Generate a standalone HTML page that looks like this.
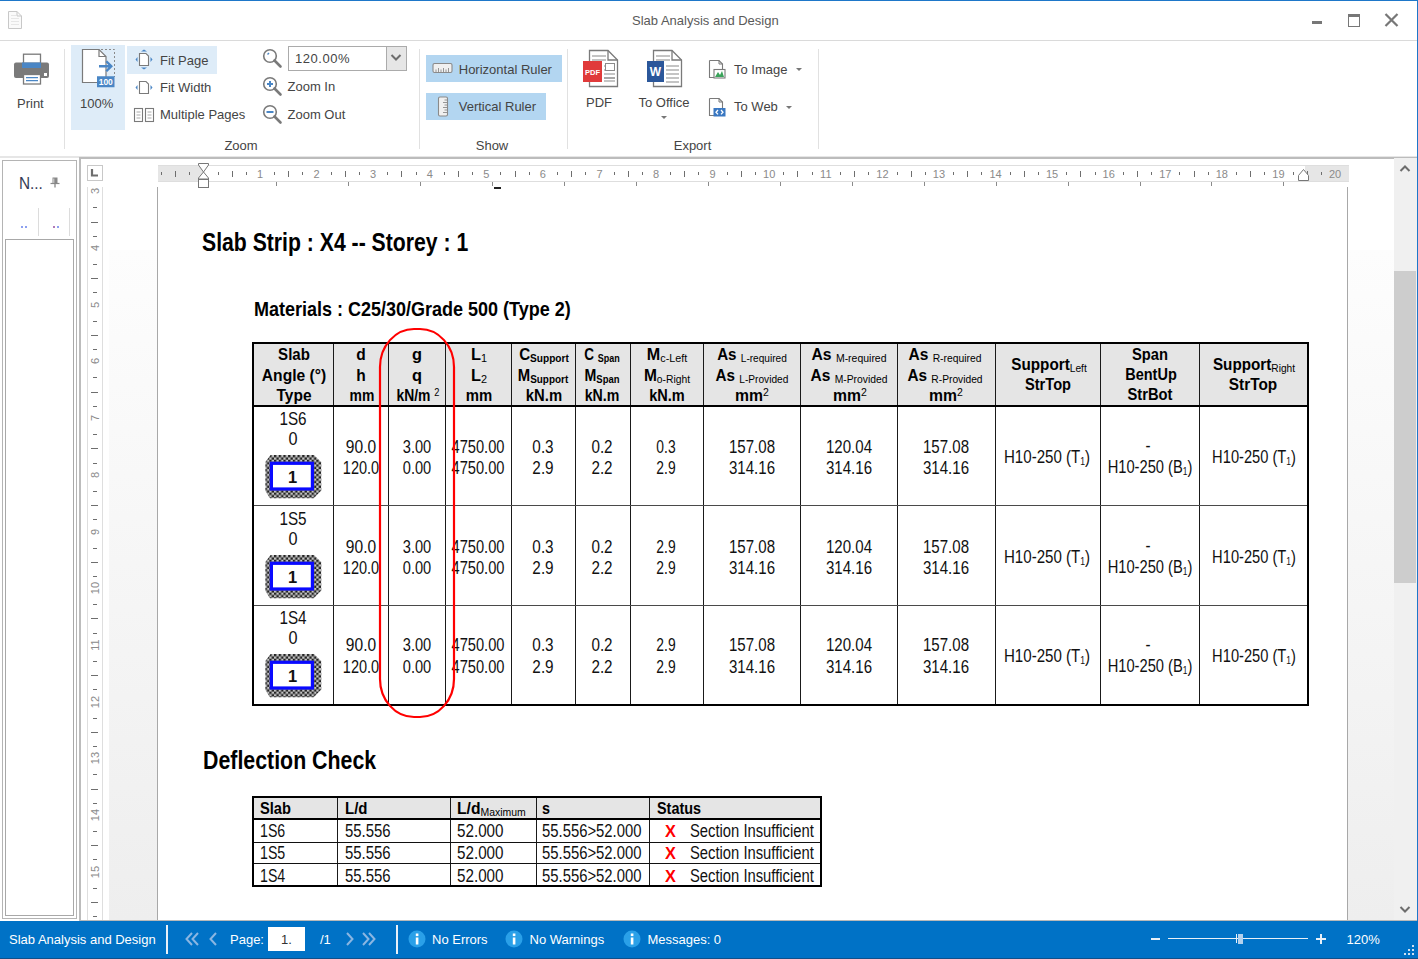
<!DOCTYPE html>
<html><head><meta charset="utf-8"><title>Slab Analysis and Design</title>
<style>
html,body{margin:0;padding:0;}
body{width:1418px;height:959px;position:relative;overflow:hidden;background:#fff;font-family:"Liberation Sans",sans-serif;}
.t{position:absolute;line-height:1;white-space:nowrap;}
.r{position:absolute;box-sizing:content-box;}
svg.r{overflow:visible}
</style></head><body>
<div class="r" style="left:0px;top:0px;width:1418px;height:1px;background:#1e77c9;"></div>
<svg class="r" style="left:7px;top:10px" width="16" height="20" viewBox="0 0 16 20">
<path d="M1.5 1.5 H10 L14.5 6 V18.5 H1.5 Z" fill="#fafafa" stroke="#c8c8c8" stroke-width="1"/>
<path d="M10 1.5 V6 H14.5" fill="none" stroke="#c8c8c8"/>
<path d="M4 5.5H9M4 8.5H12M4 11.5H12M4 14.5H12" stroke="#e6e6e6" stroke-width="1"/></svg>
<div class="t" style="left:632px;top:14.00px;font-size:13px;color:#5a5a5a;">Slab Analysis and Design</div>
<div class="r" style="left:1312px;top:21px;width:10px;height:3px;background:#777;"></div>
<div class="r" style="left:1348px;top:14px;width:10px;height:9px;border:1px solid #777;border-top:3px solid #777"></div>
<svg class="r" style="left:1384px;top:13px" width="15" height="14" viewBox="0 0 15 14">
<path d="M1.5 1 L13.5 13 M13.5 1 L1.5 13" stroke="#777" stroke-width="2.2"/></svg>
<div class="r" style="left:0px;top:40px;width:1418px;height:1px;background:#dadada;"></div>
<svg class="r" style="left:13px;top:52px" width="38" height="34" viewBox="0 0 38 34">
<rect x="10.5" y="2.2" width="17" height="10" fill="#fff" stroke="#7a7a7a" stroke-width="1.3"/>
<path d="M3 10.5 H34 Q36 10.5 36 12.5 V24 Q36 26 34 26 H3 Q1 26 1 24 V12.5 Q1 10.5 3 10.5Z" fill="#7a7a7a"/>
<rect x="9" y="10.5" width="19" height="5.5" fill="#4a86c5"/>
<rect x="31" y="21" width="3" height="3" fill="#fff"/>
<rect x="10.5" y="22.5" width="17" height="9.5" fill="#fff" stroke="#7a7a7a" stroke-width="1.3"/>
<path d="M13 25.6H25M13 28.7H25" stroke="#4a86c5" stroke-width="1.2"/></svg>
<div class="t" style="left:17px;top:97.00px;font-size:13px;color:#444;">Print</div>
<div class="r" style="left:64px;top:49px;width:1px;height:100px;background:#e1e1e1;"></div>
<div class="r" style="left:71px;top:45px;width:54px;height:85px;background:#deecf8;"></div>
<svg class="r" style="left:81px;top:48px" width="36" height="42" viewBox="0 0 36 42">
<path d="M1.5 1.5 H18 L25 8.5 V34.5 H1.5 Z" fill="#fff" stroke="#7a7a7a" stroke-width="1.2"/>
<path d="M18 1.5 V8.5 H25" fill="none" stroke="#7a7a7a" stroke-width="1.2"/>
<path d="M20 1.5 H33.5 V29" fill="none" stroke="#8a8a8a" stroke-width="1" stroke-dasharray="2 2"/>
<rect x="16" y="28.25" width="17.5" height="11" fill="#4a86c5"/>
<path d="M18 18.25 H30 M25.3 13.25 L30.3 18.25 L25.3 23.25" fill="none" stroke="#4a86c5" stroke-width="2.4"/>
<text x="24.75" y="37" font-family="Liberation Sans" font-size="8.5" fill="#fff" text-anchor="middle" font-weight="bold">100</text></svg>
<div class="t" style="left:80px;top:97.00px;font-size:13px;color:#444;">100%</div>
<div class="r" style="left:127px;top:46px;width:90px;height:28px;background:#deecf8;"></div>
<svg class="r" style="left:133px;top:49px" width="22" height="22" viewBox="0 0 22 22">
<path d="M6.5 4.5 H13 L15.5 7 V16.5 H6.5Z" fill="#fff" stroke="#7a7a7a" stroke-width="1.1"/>
<path d="M8 2.5 L11 0.5 L14 2.5Z M8 18.5 L11 20.5 L14 18.5Z M4.5 8 L2.5 10.5 L4.5 13Z M17.5 8 L19.5 10.5 L17.5 13Z" fill="#4a86c5"/></svg>
<div class="t" style="left:160px;top:54.00px;font-size:13px;color:#444;">Fit Page</div>
<svg class="r" style="left:133px;top:77px" width="22" height="22" viewBox="0 0 22 22">
<path d="M6.5 4.5 H13 L15.5 7 V16.5 H6.5Z" fill="#fff" stroke="#7a7a7a" stroke-width="1.1"/>
<path d="M4.5 8 L2.5 10.5 L4.5 13Z M17.5 8 L19.5 10.5 L17.5 13Z" fill="#4a86c5"/></svg>
<div class="t" style="left:160px;top:81.00px;font-size:13px;color:#444;">Fit Width</div>
<svg class="r" style="left:133px;top:107px" width="22" height="16" viewBox="0 0 22 16">
<rect x="1.5" y="1.5" width="8" height="13" fill="#fff" stroke="#7a7a7a" stroke-width="1.1"/>
<rect x="12.5" y="1.5" width="8" height="13" fill="#fff" stroke="#7a7a7a" stroke-width="1.1"/>
<path d="M3.5 5H7.5M3.5 8H7.5M3.5 11H7.5M14.5 5H18.5M14.5 8H18.5M14.5 11H18.5" stroke="#aaa" stroke-width="1"/></svg>
<div class="t" style="left:160px;top:108.00px;font-size:13px;color:#444;">Multiple Pages</div>
<svg class="r" style="left:262px;top:48px" width="21" height="21" viewBox="0 0 21 21">
<circle cx="8" cy="8" r="6.3" fill="#fff" stroke="#7a7a7a" stroke-width="1.6"/>
<path d="M12.5 12.5 L18.5 18.5" stroke="#7a7a7a" stroke-width="2.6" stroke-linecap="round"/><path d="M5.5 6.5 L7 5" stroke="#4a86c5" stroke-width="1.4"/></svg>
<svg class="r" style="left:262px;top:76px" width="21" height="21" viewBox="0 0 21 21">
<circle cx="8" cy="8" r="6.3" fill="#fff" stroke="#7a7a7a" stroke-width="1.6"/>
<path d="M12.5 12.5 L18.5 18.5" stroke="#7a7a7a" stroke-width="2.6" stroke-linecap="round"/><path d="M5 8H11M8 5V11" stroke="#4a86c5" stroke-width="2"/></svg>
<svg class="r" style="left:262px;top:104px" width="21" height="21" viewBox="0 0 21 21">
<circle cx="8" cy="8" r="6.3" fill="#fff" stroke="#7a7a7a" stroke-width="1.6"/>
<path d="M12.5 12.5 L18.5 18.5" stroke="#7a7a7a" stroke-width="2.6" stroke-linecap="round"/><path d="M4.5 8H11.5" stroke="#4a86c5" stroke-width="2"/></svg>
<div class="r" style="left:288px;top:46px;width:117px;height:23px;border:1px solid #ababab;background:#fff"></div>
<div class="r" style="left:386px;top:47px;width:19px;height:23px;border-left:1px solid #ababab;background:#e6e6e6"></div>
<svg class="r" style="left:390px;top:53px" width="12" height="9" viewBox="0 0 12 9"><path d="M1.5 2 L6 6.5 L10.5 2" fill="none" stroke="#6d6d6d" stroke-width="2"/></svg>
<div class="t" style="left:295px;top:52.00px;font-size:13px;color:#444;"><span style="letter-spacing:0.55px">120.00%</span></div>
<div class="t" style="left:287.5px;top:80.00px;font-size:13px;color:#444;">Zoom In</div>
<div class="t" style="left:287.5px;top:108.00px;font-size:13px;color:#444;">Zoom Out</div>
<div class="t" style="left:241px;top:139.00px;font-size:13px;color:#444;transform:translateX(-50%);transform-origin:center 50%;">Zoom</div>
<div class="r" style="left:419px;top:49px;width:1px;height:100px;background:#e1e1e1;"></div>
<div class="r" style="left:426px;top:55px;width:136px;height:27px;background:#b3d6f1;"></div>
<div class="r" style="left:426px;top:93px;width:120px;height:27px;background:#b3d6f1;"></div>
<svg class="r" style="left:432px;top:62px" width="21" height="12" viewBox="0 0 21 12">
<rect x="1" y="1.5" width="19" height="9" rx="1.5" fill="#f0f0f0" stroke="#8a8a8a" stroke-width="1.1"/>
<path d="M4 10V7.5M6.5 10V6M9 10V7.5M11.5 10V6M14 10V7.5M16.5 10V6" stroke="#8a8a8a" stroke-width="0.9"/></svg>
<div class="t" style="left:458.75px;top:63.00px;font-size:13px;color:#444;">Horizontal Ruler</div>
<svg class="r" style="left:437px;top:96px" width="12" height="21" viewBox="0 0 12 21">
<rect x="1.5" y="1" width="9" height="19" rx="1.5" fill="#f0f0f0" stroke="#8a8a8a" stroke-width="1.1"/>
<path d="M10 4H7.5M10 6.5H6M10 9H7.5M10 11.5H6M10 14H7.5M10 16.5H6" stroke="#8a8a8a" stroke-width="0.9"/></svg>
<div class="t" style="left:458.75px;top:100.00px;font-size:13px;color:#444;">Vertical Ruler</div>
<div class="t" style="left:492px;top:139.00px;font-size:13px;color:#444;transform:translateX(-50%);transform-origin:center 50%;">Show</div>
<div class="r" style="left:567px;top:49px;width:1px;height:100px;background:#e1e1e1;"></div>
<svg class="r" style="left:582px;top:49px" width="37" height="39" viewBox="0 0 37 39">
<path d="M7.5 1.5 H26 L35.5 11 V37.5 H7.5Z" fill="#fff" stroke="#7a7a7a" stroke-width="1.3"/>
<path d="M26 1.5 V11 H35.5" fill="none" stroke="#7a7a7a" stroke-width="1.3"/>
<path d="M10 7H24M10 11H24M22 17H33M22 21H33M22 25H33M22 29H33" stroke="#8a8a8a" stroke-width="1.1"/>
<rect x="23.5" y="14.5" width="9" height="7" fill="#fff" stroke="#8a8a8a"/>
<path d="M22 29H33M22 32H33" stroke="#8a8a8a" stroke-width="1.1"/>
<rect x="1" y="12" width="19" height="21" fill="#e03a3a"/>
<text x="10.5" y="26" font-family="Liberation Sans" font-size="7.5" font-weight="bold" fill="#fff" text-anchor="middle">PDF</text></svg>
<div class="t" style="left:599px;top:96.00px;font-size:13px;color:#444;transform:translateX(-50%);transform-origin:center 50%;">PDF</div>
<svg class="r" style="left:646px;top:49px" width="37" height="39" viewBox="0 0 37 39">
<path d="M7.5 1.5 H26 L35.5 11 V37.5 H7.5Z" fill="#fff" stroke="#7a7a7a" stroke-width="1.3"/>
<path d="M26 1.5 V11 H35.5" fill="none" stroke="#7a7a7a" stroke-width="1.3"/>
<path d="M10 7H24M10 11H24M20 17H33M20 21H33M20 25H33M20 29H33M20 33H33" stroke="#8a8a8a" stroke-width="1.1"/>
<rect x="1" y="12" width="17" height="21" fill="#2b579a"/>
<text x="9.5" y="27" font-family="Liberation Sans" font-size="12" font-weight="bold" fill="#fff" text-anchor="middle">W</text></svg>
<div class="t" style="left:664px;top:96.00px;font-size:13px;color:#444;transform:translateX(-50%);transform-origin:center 50%;">To Office</div>
<svg class="r" style="left:661px;top:116px" width="6" height="3" viewBox="0 0 6 3"><path d="M0 0H6L3 3Z" fill="#777"/></svg>
<svg class="r" style="left:708px;top:59px" width="19" height="21" viewBox="0 0 19 21">
<path d="M1.5 1.5 H11 L14.5 5 V18 M6 18.5 H1.5 V1.5" fill="none" stroke="#7a7a7a" stroke-width="1.1"/>
<path d="M11 1.5 V5 H14.5" fill="none" stroke="#7a7a7a"/>
<rect x="6" y="10.5" width="11" height="8.5" fill="#fff" stroke="#7a7a7a" stroke-width="1.1"/>
<path d="M7 18 L10 13 L12 16 L14 12 L16 18Z" fill="#3aa35a"/></svg>
<div class="t" style="left:734px;top:63.00px;font-size:13px;color:#444;">To Image</div>
<svg class="r" style="left:796px;top:68px" width="6" height="3" viewBox="0 0 6 3"><path d="M0 0H6L3 3Z" fill="#777"/></svg>
<svg class="r" style="left:708px;top:97px" width="19" height="21" viewBox="0 0 19 21">
<path d="M1.5 1.5 H11 L14.5 5 V11 M6 18.5 H1.5 V1.5" fill="none" stroke="#7a7a7a" stroke-width="1.1"/>
<path d="M11 1.5 V5 H14.5" fill="none" stroke="#7a7a7a"/>
<rect x="5.5" y="11" width="12" height="8.5" fill="#3a78c2"/>
<path d="M10 13 L8 15.2 L10 17.4 M13 13 L15 15.2 L13 17.4" fill="none" stroke="#fff" stroke-width="1.3"/></svg>
<div class="t" style="left:734px;top:100.00px;font-size:13px;color:#444;">To Web</div>
<svg class="r" style="left:786px;top:106px" width="6" height="3" viewBox="0 0 6 3"><path d="M0 0H6L3 3Z" fill="#777"/></svg>
<div class="t" style="left:692.5px;top:139.00px;font-size:13px;color:#444;transform:translateX(-50%);transform-origin:center 50%;">Export</div>
<div class="r" style="left:818px;top:49px;width:1px;height:100px;background:#e1e1e1;"></div>
<div class="r" style="left:0px;top:156px;width:1418px;height:2px;background:#e6e6e6;"></div>
<div class="r" style="left:2px;top:160px;width:73px;height:757px;border:1px solid #b4b4b4;background:#fff"></div>
<div class="t" style="left:18.5px;top:175.00px;font-size:16.5px;color:#333a55;"><span style="display:inline-block;transform:scaleX(0.93);transform-origin:left">N...</span></div>
<svg class="r" style="left:50px;top:177px" width="10" height="11" viewBox="0 0 10 11">
<path d="M2.5 0.5H7.5V6.5H2.5Z" fill="#888"/><path d="M3.8 1.5V6" stroke="#ddd" stroke-width="1"/>
<path d="M0.5 6.5H9.5" stroke="#888" stroke-width="1.2"/><path d="M5 6.5V10.5" stroke="#888" stroke-width="1.3"/></svg>
<div class="r" style="left:21px;top:226px;width:2px;height:2px;background:#8da0f0;"></div>
<div class="r" style="left:25px;top:226px;width:2px;height:2px;background:#8da0f0;"></div>
<div class="r" style="left:53px;top:226px;width:2px;height:2px;background:#b07ab8;"></div>
<div class="r" style="left:57px;top:226px;width:2px;height:2px;background:#8da0f0;"></div>
<div class="r" style="left:38px;top:208px;width:1px;height:28px;background:#dcdcdc;"></div>
<div class="r" style="left:69px;top:208px;width:1px;height:28px;background:#dcdcdc;"></div>
<div class="r" style="left:5px;top:239px;width:67px;height:675px;border:1px solid #a8a8a8;background:#fff"></div>
<div class="r" style="left:79px;top:157px;width:1338px;height:2px;background:#bcbcbc;"></div>
<div class="r" style="left:79px;top:157px;width:2px;height:764px;background:#bcbcbc;"></div>
<div class="r" style="left:87px;top:165px;width:14px;height:14px;border:1px solid #c8c8c8;background:#fff"></div>
<svg class="r" style="left:90px;top:168px" width="10" height="10" viewBox="0 0 10 10"><path d="M2 1V7.5H8" fill="none" stroke="#6e6e6e" stroke-width="2.2"/></svg>
<div class="r" style="left:109px;top:250px;width:48px;height:670px;background:linear-gradient(#fdfdfd, #eeeeee)"></div>
<div class="r" style="left:1348px;top:250px;width:46px;height:670px;background:linear-gradient(#fdfdfd, #eeeeee)"></div>
<div class="r" style="left:157px;top:187px;width:1px;height:733px;background:#a8a8a8;"></div>
<div class="r" style="left:1347px;top:187px;width:1px;height:733px;background:#a8a8a8;"></div>
<div class="r" style="left:158px;top:165px;width:1191px;height:15px;border-top:1px solid #dedede;border-bottom:1px solid #dedede;background:#fff"></div>
<div class="r" style="left:158px;top:166px;width:45px;height:15px;background:#e6e6e6;"></div>
<div class="r" style="left:1305px;top:166px;width:44px;height:15px;background:#e6e6e6;"></div>
<div class="r" style="left:161px;top:172px;width:1px;height:3px;background:#6e6e6e;"></div>
<div class="r" style="left:175px;top:171px;width:1px;height:6px;background:#6e6e6e;"></div>
<div class="r" style="left:189px;top:172px;width:1px;height:3px;background:#6e6e6e;"></div>
<div class="r" style="left:218px;top:172px;width:1px;height:3px;background:#6e6e6e;"></div>
<div class="r" style="left:232px;top:171px;width:1px;height:6px;background:#6e6e6e;"></div>
<div class="r" style="left:246px;top:172px;width:1px;height:3px;background:#6e6e6e;"></div>
<div class="t" style="left:260.0px;top:169.00px;font-size:11px;color:#8a8a8a;transform:translateX(-50%);transform-origin:center 50%;">1</div>
<div class="r" style="left:274px;top:172px;width:1px;height:3px;background:#6e6e6e;"></div>
<div class="r" style="left:288px;top:171px;width:1px;height:6px;background:#6e6e6e;"></div>
<div class="r" style="left:302px;top:172px;width:1px;height:3px;background:#6e6e6e;"></div>
<div class="t" style="left:316.6px;top:169.00px;font-size:11px;color:#8a8a8a;transform:translateX(-50%);transform-origin:center 50%;">2</div>
<div class="r" style="left:331px;top:172px;width:1px;height:3px;background:#6e6e6e;"></div>
<div class="r" style="left:345px;top:171px;width:1px;height:6px;background:#6e6e6e;"></div>
<div class="r" style="left:359px;top:172px;width:1px;height:3px;background:#6e6e6e;"></div>
<div class="t" style="left:373.1px;top:169.00px;font-size:11px;color:#8a8a8a;transform:translateX(-50%);transform-origin:center 50%;">3</div>
<div class="r" style="left:387px;top:172px;width:1px;height:3px;background:#6e6e6e;"></div>
<div class="r" style="left:401px;top:171px;width:1px;height:6px;background:#6e6e6e;"></div>
<div class="r" style="left:416px;top:172px;width:1px;height:3px;background:#6e6e6e;"></div>
<div class="t" style="left:429.7px;top:169.00px;font-size:11px;color:#8a8a8a;transform:translateX(-50%);transform-origin:center 50%;">4</div>
<div class="r" style="left:444px;top:172px;width:1px;height:3px;background:#6e6e6e;"></div>
<div class="r" style="left:458px;top:171px;width:1px;height:6px;background:#6e6e6e;"></div>
<div class="r" style="left:472px;top:172px;width:1px;height:3px;background:#6e6e6e;"></div>
<div class="t" style="left:486.3px;top:169.00px;font-size:11px;color:#8a8a8a;transform:translateX(-50%);transform-origin:center 50%;">5</div>
<div class="r" style="left:500px;top:172px;width:1px;height:3px;background:#6e6e6e;"></div>
<div class="r" style="left:515px;top:171px;width:1px;height:6px;background:#6e6e6e;"></div>
<div class="r" style="left:529px;top:172px;width:1px;height:3px;background:#6e6e6e;"></div>
<div class="t" style="left:542.9px;top:169.00px;font-size:11px;color:#8a8a8a;transform:translateX(-50%);transform-origin:center 50%;">6</div>
<div class="r" style="left:557px;top:172px;width:1px;height:3px;background:#6e6e6e;"></div>
<div class="r" style="left:571px;top:171px;width:1px;height:6px;background:#6e6e6e;"></div>
<div class="r" style="left:585px;top:172px;width:1px;height:3px;background:#6e6e6e;"></div>
<div class="t" style="left:599.5px;top:169.00px;font-size:11px;color:#8a8a8a;transform:translateX(-50%);transform-origin:center 50%;">7</div>
<div class="r" style="left:614px;top:172px;width:1px;height:3px;background:#6e6e6e;"></div>
<div class="r" style="left:628px;top:171px;width:1px;height:6px;background:#6e6e6e;"></div>
<div class="r" style="left:642px;top:172px;width:1px;height:3px;background:#6e6e6e;"></div>
<div class="t" style="left:656.0px;top:169.00px;font-size:11px;color:#8a8a8a;transform:translateX(-50%);transform-origin:center 50%;">8</div>
<div class="r" style="left:670px;top:172px;width:1px;height:3px;background:#6e6e6e;"></div>
<div class="r" style="left:684px;top:171px;width:1px;height:6px;background:#6e6e6e;"></div>
<div class="r" style="left:698px;top:172px;width:1px;height:3px;background:#6e6e6e;"></div>
<div class="t" style="left:712.6px;top:169.00px;font-size:11px;color:#8a8a8a;transform:translateX(-50%);transform-origin:center 50%;">9</div>
<div class="r" style="left:727px;top:172px;width:1px;height:3px;background:#6e6e6e;"></div>
<div class="r" style="left:741px;top:171px;width:1px;height:6px;background:#6e6e6e;"></div>
<div class="r" style="left:755px;top:172px;width:1px;height:3px;background:#6e6e6e;"></div>
<div class="t" style="left:769.2px;top:169.00px;font-size:11px;color:#8a8a8a;transform:translateX(-50%);transform-origin:center 50%;">10</div>
<div class="r" style="left:783px;top:172px;width:1px;height:3px;background:#6e6e6e;"></div>
<div class="r" style="left:797px;top:171px;width:1px;height:6px;background:#6e6e6e;"></div>
<div class="r" style="left:812px;top:172px;width:1px;height:3px;background:#6e6e6e;"></div>
<div class="t" style="left:825.8px;top:169.00px;font-size:11px;color:#8a8a8a;transform:translateX(-50%);transform-origin:center 50%;">11</div>
<div class="r" style="left:840px;top:172px;width:1px;height:3px;background:#6e6e6e;"></div>
<div class="r" style="left:854px;top:171px;width:1px;height:6px;background:#6e6e6e;"></div>
<div class="r" style="left:868px;top:172px;width:1px;height:3px;background:#6e6e6e;"></div>
<div class="t" style="left:882.4px;top:169.00px;font-size:11px;color:#8a8a8a;transform:translateX(-50%);transform-origin:center 50%;">12</div>
<div class="r" style="left:897px;top:172px;width:1px;height:3px;background:#6e6e6e;"></div>
<div class="r" style="left:911px;top:171px;width:1px;height:6px;background:#6e6e6e;"></div>
<div class="r" style="left:925px;top:172px;width:1px;height:3px;background:#6e6e6e;"></div>
<div class="t" style="left:938.9px;top:169.00px;font-size:11px;color:#8a8a8a;transform:translateX(-50%);transform-origin:center 50%;">13</div>
<div class="r" style="left:953px;top:172px;width:1px;height:3px;background:#6e6e6e;"></div>
<div class="r" style="left:967px;top:171px;width:1px;height:6px;background:#6e6e6e;"></div>
<div class="r" style="left:981px;top:172px;width:1px;height:3px;background:#6e6e6e;"></div>
<div class="t" style="left:995.5px;top:169.00px;font-size:11px;color:#8a8a8a;transform:translateX(-50%);transform-origin:center 50%;">14</div>
<div class="r" style="left:1010px;top:172px;width:1px;height:3px;background:#6e6e6e;"></div>
<div class="r" style="left:1024px;top:171px;width:1px;height:6px;background:#6e6e6e;"></div>
<div class="r" style="left:1038px;top:172px;width:1px;height:3px;background:#6e6e6e;"></div>
<div class="t" style="left:1052.1px;top:169.00px;font-size:11px;color:#8a8a8a;transform:translateX(-50%);transform-origin:center 50%;">15</div>
<div class="r" style="left:1066px;top:172px;width:1px;height:3px;background:#6e6e6e;"></div>
<div class="r" style="left:1080px;top:171px;width:1px;height:6px;background:#6e6e6e;"></div>
<div class="r" style="left:1095px;top:172px;width:1px;height:3px;background:#6e6e6e;"></div>
<div class="t" style="left:1108.7px;top:169.00px;font-size:11px;color:#8a8a8a;transform:translateX(-50%);transform-origin:center 50%;">16</div>
<div class="r" style="left:1123px;top:172px;width:1px;height:3px;background:#6e6e6e;"></div>
<div class="r" style="left:1137px;top:171px;width:1px;height:6px;background:#6e6e6e;"></div>
<div class="r" style="left:1151px;top:172px;width:1px;height:3px;background:#6e6e6e;"></div>
<div class="t" style="left:1165.3px;top:169.00px;font-size:11px;color:#8a8a8a;transform:translateX(-50%);transform-origin:center 50%;">17</div>
<div class="r" style="left:1179px;top:172px;width:1px;height:3px;background:#6e6e6e;"></div>
<div class="r" style="left:1194px;top:171px;width:1px;height:6px;background:#6e6e6e;"></div>
<div class="r" style="left:1208px;top:172px;width:1px;height:3px;background:#6e6e6e;"></div>
<div class="t" style="left:1221.8px;top:169.00px;font-size:11px;color:#8a8a8a;transform:translateX(-50%);transform-origin:center 50%;">18</div>
<div class="r" style="left:1236px;top:172px;width:1px;height:3px;background:#6e6e6e;"></div>
<div class="r" style="left:1250px;top:171px;width:1px;height:6px;background:#6e6e6e;"></div>
<div class="r" style="left:1264px;top:172px;width:1px;height:3px;background:#6e6e6e;"></div>
<div class="t" style="left:1278.4px;top:169.00px;font-size:11px;color:#8a8a8a;transform:translateX(-50%);transform-origin:center 50%;">19</div>
<div class="r" style="left:1293px;top:172px;width:1px;height:3px;background:#6e6e6e;"></div>
<div class="r" style="left:1307px;top:171px;width:1px;height:6px;background:#6e6e6e;"></div>
<div class="r" style="left:1321px;top:172px;width:1px;height:3px;background:#6e6e6e;"></div>
<div class="t" style="left:1335.0px;top:169.00px;font-size:11px;color:#8a8a8a;transform:translateX(-50%);transform-origin:center 50%;">20</div>
<div class="r" style="left:276px;top:182px;width:1px;height:4px;background:#8a8a8a;"></div>
<div class="r" style="left:348px;top:182px;width:1px;height:4px;background:#8a8a8a;"></div>
<div class="r" style="left:420px;top:182px;width:1px;height:4px;background:#8a8a8a;"></div>
<div class="r" style="left:492px;top:182px;width:1px;height:4px;background:#8a8a8a;"></div>
<div class="r" style="left:564px;top:182px;width:1px;height:4px;background:#8a8a8a;"></div>
<div class="r" style="left:636px;top:182px;width:1px;height:4px;background:#8a8a8a;"></div>
<div class="r" style="left:708px;top:182px;width:1px;height:4px;background:#8a8a8a;"></div>
<div class="r" style="left:780px;top:182px;width:1px;height:4px;background:#8a8a8a;"></div>
<div class="r" style="left:852px;top:182px;width:1px;height:4px;background:#8a8a8a;"></div>
<div class="r" style="left:924px;top:182px;width:1px;height:4px;background:#8a8a8a;"></div>
<div class="r" style="left:996px;top:182px;width:1px;height:4px;background:#8a8a8a;"></div>
<div class="r" style="left:1068px;top:182px;width:1px;height:4px;background:#8a8a8a;"></div>
<div class="r" style="left:1140px;top:182px;width:1px;height:4px;background:#8a8a8a;"></div>
<div class="r" style="left:1211px;top:182px;width:1px;height:4px;background:#8a8a8a;"></div>
<div class="r" style="left:1283px;top:182px;width:1px;height:4px;background:#8a8a8a;"></div>
<div class="r" style="left:494px;top:187px;width:7px;height:2px;background:#222;"></div>
<svg class="r" style="left:197px;top:162px" width="13" height="27" viewBox="0 0 13 27">
<path d="M1.5 1.5H11.5V3L6.5 10L1.5 3Z" fill="#fff" stroke="#777" stroke-width="1"/>
<path d="M6.5 10L11.5 16V17H1.5V16Z" fill="#fff" stroke="#777" stroke-width="1"/>
<rect x="1.5" y="17.5" width="10" height="8" fill="#fff" stroke="#777" stroke-width="1"/></svg>
<svg class="r" style="left:1297px;top:168px" width="13" height="14" viewBox="0 0 13 14">
<path d="M6.5 1.5L11.5 7.5V12.5H1.5V7.5Z" fill="#fff" stroke="#777" stroke-width="1"/></svg>
<div class="r" style="left:87px;top:187px;width:14px;height:733px;border-left:1px solid #dedede;border-right:1px solid #dedede;background:#fff"></div>
<div class="t" style="left:94.5px;top:191.3px;font-size:11px;color:#8a8a8a;transform:translate(-50%,-50%) rotate(-90deg)">3</div>
<div class="r" style="left:93px;top:207px;width:4px;height:1px;background:#6e6e6e;"></div>
<div class="r" style="left:91px;top:222px;width:7px;height:1px;background:#6e6e6e;"></div>
<div class="r" style="left:93px;top:236px;width:4px;height:1px;background:#6e6e6e;"></div>
<div class="t" style="left:94.5px;top:248.0px;font-size:11px;color:#8a8a8a;transform:translate(-50%,-50%) rotate(-90deg)">4</div>
<div class="r" style="left:93px;top:264px;width:4px;height:1px;background:#6e6e6e;"></div>
<div class="r" style="left:91px;top:278px;width:7px;height:1px;background:#6e6e6e;"></div>
<div class="r" style="left:93px;top:292px;width:4px;height:1px;background:#6e6e6e;"></div>
<div class="t" style="left:94.5px;top:304.7px;font-size:11px;color:#8a8a8a;transform:translate(-50%,-50%) rotate(-90deg)">5</div>
<div class="r" style="left:93px;top:321px;width:4px;height:1px;background:#6e6e6e;"></div>
<div class="r" style="left:91px;top:335px;width:7px;height:1px;background:#6e6e6e;"></div>
<div class="r" style="left:93px;top:349px;width:4px;height:1px;background:#6e6e6e;"></div>
<div class="t" style="left:94.5px;top:361.4px;font-size:11px;color:#8a8a8a;transform:translate(-50%,-50%) rotate(-90deg)">6</div>
<div class="r" style="left:93px;top:377px;width:4px;height:1px;background:#6e6e6e;"></div>
<div class="r" style="left:91px;top:392px;width:7px;height:1px;background:#6e6e6e;"></div>
<div class="r" style="left:93px;top:406px;width:4px;height:1px;background:#6e6e6e;"></div>
<div class="t" style="left:94.5px;top:418.1px;font-size:11px;color:#8a8a8a;transform:translate(-50%,-50%) rotate(-90deg)">7</div>
<div class="r" style="left:93px;top:434px;width:4px;height:1px;background:#6e6e6e;"></div>
<div class="r" style="left:91px;top:448px;width:7px;height:1px;background:#6e6e6e;"></div>
<div class="r" style="left:93px;top:463px;width:4px;height:1px;background:#6e6e6e;"></div>
<div class="t" style="left:94.5px;top:474.8px;font-size:11px;color:#8a8a8a;transform:translate(-50%,-50%) rotate(-90deg)">8</div>
<div class="r" style="left:93px;top:491px;width:4px;height:1px;background:#6e6e6e;"></div>
<div class="r" style="left:91px;top:505px;width:7px;height:1px;background:#6e6e6e;"></div>
<div class="r" style="left:93px;top:519px;width:4px;height:1px;background:#6e6e6e;"></div>
<div class="t" style="left:94.5px;top:531.5px;font-size:11px;color:#8a8a8a;transform:translate(-50%,-50%) rotate(-90deg)">9</div>
<div class="r" style="left:93px;top:548px;width:4px;height:1px;background:#6e6e6e;"></div>
<div class="r" style="left:91px;top:562px;width:7px;height:1px;background:#6e6e6e;"></div>
<div class="r" style="left:93px;top:576px;width:4px;height:1px;background:#6e6e6e;"></div>
<div class="t" style="left:94.5px;top:588.2px;font-size:11px;color:#8a8a8a;transform:translate(-50%,-50%) rotate(-90deg)">10</div>
<div class="r" style="left:93px;top:604px;width:4px;height:1px;background:#6e6e6e;"></div>
<div class="r" style="left:91px;top:618px;width:7px;height:1px;background:#6e6e6e;"></div>
<div class="r" style="left:93px;top:633px;width:4px;height:1px;background:#6e6e6e;"></div>
<div class="t" style="left:94.5px;top:644.9px;font-size:11px;color:#8a8a8a;transform:translate(-50%,-50%) rotate(-90deg)">11</div>
<div class="r" style="left:93px;top:661px;width:4px;height:1px;background:#6e6e6e;"></div>
<div class="r" style="left:91px;top:675px;width:7px;height:1px;background:#6e6e6e;"></div>
<div class="r" style="left:93px;top:689px;width:4px;height:1px;background:#6e6e6e;"></div>
<div class="t" style="left:94.5px;top:701.6px;font-size:11px;color:#8a8a8a;transform:translate(-50%,-50%) rotate(-90deg)">12</div>
<div class="r" style="left:93px;top:718px;width:4px;height:1px;background:#6e6e6e;"></div>
<div class="r" style="left:91px;top:732px;width:7px;height:1px;background:#6e6e6e;"></div>
<div class="r" style="left:93px;top:746px;width:4px;height:1px;background:#6e6e6e;"></div>
<div class="t" style="left:94.5px;top:758.3px;font-size:11px;color:#8a8a8a;transform:translate(-50%,-50%) rotate(-90deg)">13</div>
<div class="r" style="left:93px;top:774px;width:4px;height:1px;background:#6e6e6e;"></div>
<div class="r" style="left:91px;top:789px;width:7px;height:1px;background:#6e6e6e;"></div>
<div class="r" style="left:93px;top:803px;width:4px;height:1px;background:#6e6e6e;"></div>
<div class="t" style="left:94.5px;top:815.0px;font-size:11px;color:#8a8a8a;transform:translate(-50%,-50%) rotate(-90deg)">14</div>
<div class="r" style="left:93px;top:831px;width:4px;height:1px;background:#6e6e6e;"></div>
<div class="r" style="left:91px;top:845px;width:7px;height:1px;background:#6e6e6e;"></div>
<div class="r" style="left:93px;top:859px;width:4px;height:1px;background:#6e6e6e;"></div>
<div class="t" style="left:94.5px;top:871.7px;font-size:11px;color:#8a8a8a;transform:translate(-50%,-50%) rotate(-90deg)">15</div>
<div class="r" style="left:93px;top:888px;width:4px;height:1px;background:#6e6e6e;"></div>
<div class="r" style="left:91px;top:902px;width:7px;height:1px;background:#6e6e6e;"></div>
<div class="r" style="left:93px;top:916px;width:4px;height:1px;background:#6e6e6e;"></div>
<div class="r" style="left:1394px;top:158px;width:23px;height:762px;background:#f0f0f0;"></div>
<div class="r" style="left:1394px;top:271px;width:22px;height:312px;background:#cdcdcd;"></div>
<svg class="r" style="left:1399px;top:164px" width="12" height="9" viewBox="0 0 12 9"><path d="M1.5 7 L6 2.5 L10.5 7" fill="none" stroke="#6d6d6d" stroke-width="2"/></svg>
<svg class="r" style="left:1399px;top:905px" width="12" height="9" viewBox="0 0 12 9"><path d="M1.5 2 L6 6.5 L10.5 2" fill="none" stroke="#6d6d6d" stroke-width="2"/></svg>
<div class="r" style="left:80px;top:920px;width:1337px;height:1px;background:#b9b9b9;"></div>
<div class="r" style="left:1417px;top:0px;width:1px;height:959px;background:#1e77c9;"></div>
<div class="t" style="left:202.4px;top:229.00px;font-size:26px;color:#000;font-weight:bold;transform:scaleX(0.8152);transform-origin:left 50%;">Slab Strip : X4 -- Storey : 1</div>
<div class="t" style="left:254px;top:298.00px;font-size:21px;color:#000;font-weight:bold;transform:scaleX(0.857);transform-origin:left 50%;">Materials : C25/30/Grade 500 (Type 2)</div>
<div class="r" style="left:252px;top:342px;width:1057px;height:64px;background:#e5e5e5;"></div>
<div class="r" style="left:333px;top:342px;width:1px;height:364px;background:#1a1a1a;"></div>
<div class="r" style="left:388px;top:342px;width:1px;height:364px;background:#1a1a1a;"></div>
<div class="r" style="left:445px;top:342px;width:1px;height:364px;background:#1a1a1a;"></div>
<div class="r" style="left:511px;top:342px;width:1px;height:364px;background:#1a1a1a;"></div>
<div class="r" style="left:575px;top:342px;width:1px;height:364px;background:#1a1a1a;"></div>
<div class="r" style="left:630px;top:342px;width:1px;height:364px;background:#1a1a1a;"></div>
<div class="r" style="left:703px;top:342px;width:1px;height:364px;background:#1a1a1a;"></div>
<div class="r" style="left:800px;top:342px;width:1px;height:364px;background:#1a1a1a;"></div>
<div class="r" style="left:897px;top:342px;width:1px;height:364px;background:#1a1a1a;"></div>
<div class="r" style="left:995px;top:342px;width:1px;height:364px;background:#1a1a1a;"></div>
<div class="r" style="left:1100px;top:342px;width:1px;height:364px;background:#1a1a1a;"></div>
<div class="r" style="left:1199px;top:342px;width:1px;height:364px;background:#1a1a1a;"></div>
<div class="r" style="left:252px;top:505px;width:1057px;height:1px;background:#4a4a4a;"></div>
<div class="r" style="left:252px;top:605px;width:1057px;height:1px;background:#4a4a4a;"></div>
<div class="r" style="left:252px;top:342px;width:1057px;height:2px;background:#000;"></div>
<div class="r" style="left:252px;top:405px;width:1057px;height:2px;background:#000;"></div>
<div class="r" style="left:252px;top:704px;width:1057px;height:2px;background:#000;"></div>
<div class="r" style="left:252px;top:342px;width:2px;height:364px;background:#000;"></div>
<div class="r" style="left:1307px;top:342px;width:2px;height:364px;background:#000;"></div>
<div class="t" style="left:293.9px;top:346.00px;font-size:16.5px;color:#000;font-weight:bold;transform:translateX(-50%) scaleX(0.9119);transform-origin:center 50%;">Slab</div>
<div class="t" style="left:293.5px;top:367.00px;font-size:16.5px;color:#000;font-weight:bold;transform:translateX(-50%) scaleX(0.9467);transform-origin:center 50%;">Angle (°)</div>
<div class="t" style="left:294px;top:387.00px;font-size:16.5px;color:#000;font-weight:bold;transform:translateX(-50%) scaleX(0.9381);transform-origin:center 50%;">Type</div>
<div class="t" style="left:361px;top:346.00px;font-size:16.5px;color:#000;font-weight:bold;transform:translateX(-50%) scaleX(0.9402);transform-origin:center 50%;">d</div>
<div class="t" style="left:361px;top:367.00px;font-size:16.5px;color:#000;font-weight:bold;transform:translateX(-50%) scaleX(0.9402);transform-origin:center 50%;">h</div>
<div class="t" style="left:361.7px;top:387.00px;font-size:16.5px;color:#000;font-weight:bold;transform:translateX(-50%) scaleX(0.8448);transform-origin:center 50%;">mm</div>
<div class="t" style="left:417px;top:346.00px;font-size:16.5px;color:#000;font-weight:bold;transform:translateX(-50%) scaleX(0.9897);transform-origin:center 50%;">g</div>
<div class="t" style="left:417px;top:367.00px;font-size:16.5px;color:#000;font-weight:bold;transform:translateX(-50%) scaleX(0.9897);transform-origin:center 50%;">q</div>
<div class="t" style="left:417.5px;top:387.00px;font-size:16.5px;color:#000;font-weight:bold;transform:translateX(-50%) scaleX(0.8419);transform-origin:center 50%;">kN/m <span style="font-size:11px;font-weight:normal;position:relative;top:-5px;line-height:0">2</span></div>
<div class="t" style="left:478.8px;top:346.00px;font-size:16.5px;color:#000;font-weight:bold;transform:translateX(-50%) scaleX(0.9859);transform-origin:center 50%;">L<span style="font-size:11px;font-weight:normal;position:relative;top:1.5px;line-height:0">1</span></div>
<div class="t" style="left:478.8px;top:367.00px;font-size:16.5px;color:#000;font-weight:bold;transform:translateX(-50%) scaleX(0.9859);transform-origin:center 50%;">L<span style="font-size:11px;font-weight:normal;position:relative;top:1.5px;line-height:0">2</span></div>
<div class="t" style="left:478.8px;top:387.00px;font-size:16.5px;color:#000;font-weight:bold;transform:translateX(-50%) scaleX(0.9027);transform-origin:center 50%;">mm</div>
<div class="t" style="left:543.6px;top:346.00px;font-size:16.5px;color:#000;font-weight:bold;transform:translateX(-50%) scaleX(0.9186);transform-origin:center 50%;">C<span style="font-size:11px;font-weight:bold;position:relative;top:1.5px;line-height:0">Support</span></div>
<div class="t" style="left:543.3px;top:367.00px;font-size:16.5px;color:#000;font-weight:bold;transform:translateX(-50%) scaleX(0.9011);transform-origin:center 50%;">M<span style="font-size:11px;font-weight:bold;position:relative;top:1.5px;line-height:0">Support</span></div>
<div class="t" style="left:544px;top:387.00px;font-size:16.5px;color:#000;font-weight:bold;transform:translateX(-50%) scaleX(0.8992);transform-origin:center 50%;">kN.m</div>
<div class="t" style="left:602.2px;top:346.00px;font-size:16.5px;color:#000;font-weight:bold;transform:translateX(-50%) scaleX(0.8176);transform-origin:center 50%;">C <span style="font-size:11px;font-weight:bold;position:relative;top:1.5px;line-height:0">Span</span></div>
<div class="t" style="left:602px;top:367.00px;font-size:16.5px;color:#000;font-weight:bold;transform:translateX(-50%) scaleX(0.8606);transform-origin:center 50%;">M<span style="font-size:11px;font-weight:bold;position:relative;top:1.5px;line-height:0">Span</span></div>
<div class="t" style="left:601.9px;top:387.00px;font-size:16.5px;color:#000;font-weight:bold;transform:translateX(-50%) scaleX(0.8595);transform-origin:center 50%;">kN.m</div>
<div class="t" style="left:666.7px;top:346.00px;font-size:16.5px;color:#000;font-weight:bold;transform:translateX(-50%) scaleX(0.9788);transform-origin:center 50%;">M<span style="font-size:11px;font-weight:normal;position:relative;top:1.5px;line-height:0">c-Left</span></div>
<div class="t" style="left:667.4px;top:367.00px;font-size:16.5px;color:#000;font-weight:bold;transform:translateX(-50%) scaleX(0.9385);transform-origin:center 50%;">M<span style="font-size:11px;font-weight:normal;position:relative;top:1.5px;line-height:0">o-Right</span></div>
<div class="t" style="left:667px;top:387.00px;font-size:16.5px;color:#000;font-weight:bold;transform:translateX(-50%) scaleX(0.8818);transform-origin:center 50%;">kN.m</div>
<div class="t" style="left:752.35px;top:346.00px;font-size:16.5px;color:#000;font-weight:bold;transform:translateX(-50%) scaleX(0.9191);transform-origin:center 50%;">As <span style="font-size:11px;font-weight:normal;position:relative;top:1.5px;line-height:0">L-required</span></div>
<div class="t" style="left:752.35px;top:367.00px;font-size:16.5px;color:#000;font-weight:bold;transform:translateX(-50%) scaleX(0.9227);transform-origin:center 50%;">As <span style="font-size:11px;font-weight:normal;position:relative;top:1.5px;line-height:0">L-Provided</span></div>
<div class="t" style="left:752.4px;top:387.00px;font-size:16.5px;color:#000;font-weight:bold;transform:translateX(-50%) scaleX(0.9527);transform-origin:center 50%;">mm<span style="font-size:11px;font-weight:normal;position:relative;top:-5px;line-height:0">2</span></div>
<div class="t" style="left:849px;top:346.00px;font-size:16.5px;color:#000;font-weight:bold;transform:translateX(-50%) scaleX(0.9507);transform-origin:center 50%;">As <span style="font-size:11px;font-weight:normal;position:relative;top:1.5px;line-height:0">M-required</span></div>
<div class="t" style="left:849px;top:367.00px;font-size:16.5px;color:#000;font-weight:bold;transform:translateX(-50%) scaleX(0.9396);transform-origin:center 50%;">As <span style="font-size:11px;font-weight:normal;position:relative;top:1.5px;line-height:0">M-Provided</span></div>
<div class="t" style="left:849.5px;top:387.00px;font-size:16.5px;color:#000;font-weight:bold;transform:translateX(-50%) scaleX(0.9527);transform-origin:center 50%;">mm<span style="font-size:11px;font-weight:normal;position:relative;top:-5px;line-height:0">2</span></div>
<div class="t" style="left:945.4px;top:346.00px;font-size:16.5px;color:#000;font-weight:bold;transform:translateX(-50%) scaleX(0.9399);transform-origin:center 50%;">As <span style="font-size:11px;font-weight:normal;position:relative;top:1.5px;line-height:0">R-required</span></div>
<div class="t" style="left:945.4px;top:367.00px;font-size:16.5px;color:#000;font-weight:bold;transform:translateX(-50%) scaleX(0.9303);transform-origin:center 50%;">As <span style="font-size:11px;font-weight:normal;position:relative;top:1.5px;line-height:0">R-Provided</span></div>
<div class="t" style="left:946.45px;top:387.00px;font-size:16.5px;color:#000;font-weight:bold;transform:translateX(-50%) scaleX(0.9527);transform-origin:center 50%;">mm<span style="font-size:11px;font-weight:normal;position:relative;top:-5px;line-height:0">2</span></div>
<div class="t" style="left:1048.7px;top:356.00px;font-size:16.5px;color:#000;font-weight:bold;transform:translateX(-50%) scaleX(0.9262);transform-origin:center 50%;">Support<span style="font-size:11px;font-weight:normal;position:relative;top:1.5px;line-height:0">Left</span></div>
<div class="t" style="left:1047.5px;top:376.00px;font-size:16.5px;color:#000;font-weight:bold;transform:translateX(-50%) scaleX(0.8855);transform-origin:center 50%;">StrTop</div>
<div class="t" style="left:1149.5px;top:346.00px;font-size:16.5px;color:#000;font-weight:bold;transform:translateX(-50%) scaleX(0.8921);transform-origin:center 50%;">Span</div>
<div class="t" style="left:1150.7px;top:366.00px;font-size:16.5px;color:#000;font-weight:bold;transform:translateX(-50%) scaleX(0.8793);transform-origin:center 50%;">BentUp</div>
<div class="t" style="left:1149.7px;top:386.00px;font-size:16.5px;color:#000;font-weight:bold;transform:translateX(-50%) scaleX(0.8923);transform-origin:center 50%;">StrBot</div>
<div class="t" style="left:1254.1px;top:356.00px;font-size:16.5px;color:#000;font-weight:bold;transform:translateX(-50%) scaleX(0.9241);transform-origin:center 50%;">Support<span style="font-size:11px;font-weight:normal;position:relative;top:1.5px;line-height:0">Right</span></div>
<div class="t" style="left:1253px;top:376.00px;font-size:16.5px;color:#000;font-weight:bold;transform:translateX(-50%) scaleX(0.9317);transform-origin:center 50%;">StrTop</div>
<div class="t" style="left:292.5px;top:411.00px;font-size:17.5px;color:#111;transform:translateX(-50%) scaleX(0.8719);transform-origin:center 50%;">1S6</div>
<div class="t" style="left:292.9px;top:431.00px;font-size:17.5px;color:#111;transform:translateX(-50%) scaleX(0.9297);transform-origin:center 50%;">0</div>
<svg class="r" style="left:264px;top:454px" width="58" height="46" viewBox="0 0 58 46">
<defs><pattern id="hp264454" width="4.7" height="4.7" patternUnits="userSpaceOnUse" x="0.6" y="1"><rect width="4.7" height="4.7" fill="#c4c4c4"/><rect x="0" y="0" width="2.35" height="2.35" fill="#222"/><rect x="2.35" y="2.35" width="2.35" height="2.35" fill="#222"/></pattern></defs>
<path d="M6.6 1 H50 L57.25 8 V36.6 L49.7 44.2 H6 L1.4 37 V8 Z" fill="url(#hp264454)"/>
<rect x="7.4" y="9.3" width="41" height="25.7" fill="#fff" stroke="#0a0aff" stroke-width="3.2"/>
<text x="28.6" y="29.3" font-family="Liberation Sans" font-size="16.5" font-weight="bold" fill="#111" text-anchor="middle">1</text></svg>
<div class="t" style="left:361.4px;top:439.00px;font-size:17.5px;color:#111;transform:translateX(-50%) scaleX(0.8881);transform-origin:center 50%;">90.0</div>
<div class="t" style="left:361.35px;top:460.00px;font-size:17.5px;color:#111;transform:translateX(-50%) scaleX(0.83);transform-origin:center 50%;">120.0</div>
<div class="t" style="left:416.7px;top:439.00px;font-size:17.5px;color:#111;transform:translateX(-50%) scaleX(0.8352);transform-origin:center 50%;">3.00</div>
<div class="t" style="left:416.7px;top:460.00px;font-size:17.5px;color:#111;transform:translateX(-50%) scaleX(0.8352);transform-origin:center 50%;">0.00</div>
<div class="t" style="left:478px;top:439.00px;font-size:17.5px;color:#111;transform:translateX(-50%) scaleX(0.8385);transform-origin:center 50%;">4750.00</div>
<div class="t" style="left:478px;top:460.00px;font-size:17.5px;color:#111;transform:translateX(-50%) scaleX(0.8385);transform-origin:center 50%;">4750.00</div>
<div class="t" style="left:543px;top:439.00px;font-size:17.5px;color:#111;transform:translateX(-50%) scaleX(0.8735);transform-origin:center 50%;">0.3</div>
<div class="t" style="left:543px;top:460.00px;font-size:17.5px;color:#111;transform:translateX(-50%) scaleX(0.8735);transform-origin:center 50%;">2.9</div>
<div class="t" style="left:601.8px;top:439.00px;font-size:17.5px;color:#111;transform:translateX(-50%) scaleX(0.8694);transform-origin:center 50%;">0.2</div>
<div class="t" style="left:601.8px;top:460.00px;font-size:17.5px;color:#111;transform:translateX(-50%) scaleX(0.8694);transform-origin:center 50%;">2.2</div>
<div class="t" style="left:666px;top:439.00px;font-size:17.5px;color:#111;transform:translateX(-50%) scaleX(0.7913);transform-origin:center 50%;">0.3</div>
<div class="t" style="left:666px;top:460.00px;font-size:17.5px;color:#111;transform:translateX(-50%) scaleX(0.7913);transform-origin:center 50%;">2.9</div>
<div class="t" style="left:752px;top:439.00px;font-size:17.5px;color:#111;transform:translateX(-50%) scaleX(0.8602);transform-origin:center 50%;">157.08</div>
<div class="t" style="left:752px;top:460.00px;font-size:17.5px;color:#111;transform:translateX(-50%) scaleX(0.8602);transform-origin:center 50%;">314.16</div>
<div class="t" style="left:849px;top:439.00px;font-size:17.5px;color:#111;transform:translateX(-50%) scaleX(0.8602);transform-origin:center 50%;">120.04</div>
<div class="t" style="left:849px;top:460.00px;font-size:17.5px;color:#111;transform:translateX(-50%) scaleX(0.8602);transform-origin:center 50%;">314.16</div>
<div class="t" style="left:945.5px;top:439.00px;font-size:17.5px;color:#111;transform:translateX(-50%) scaleX(0.8602);transform-origin:center 50%;">157.08</div>
<div class="t" style="left:945.5px;top:460.00px;font-size:17.5px;color:#111;transform:translateX(-50%) scaleX(0.8602);transform-origin:center 50%;">314.16</div>
<div class="t" style="left:1046.9px;top:449.00px;font-size:17.5px;color:#111;transform:translateX(-50%) scaleX(0.8613);transform-origin:center 50%;">H10-250 (T<span style="font-size:10px;font-weight:normal;position:relative;top:1.5px;line-height:0">1</span>)</div>
<div class="t" style="left:1148.3px;top:438.00px;font-size:17.5px;color:#111;transform:translateX(-50%) scaleX(0.8665);transform-origin:center 50%;">-</div>
<div class="t" style="left:1149.9px;top:459.00px;font-size:17.5px;color:#111;transform:translateX(-50%) scaleX(0.84);transform-origin:center 50%;">H10-250 (B<span style="font-size:10px;font-weight:normal;position:relative;top:1.5px;line-height:0">1</span>)</div>
<div class="t" style="left:1253.7px;top:449.00px;font-size:17.5px;color:#111;transform:translateX(-50%) scaleX(0.8383);transform-origin:center 50%;">H10-250 (T<span style="font-size:10px;font-weight:normal;position:relative;top:1.5px;line-height:0">1</span>)</div>
<div class="t" style="left:292.5px;top:511.00px;font-size:17.5px;color:#111;transform:translateX(-50%) scaleX(0.8719);transform-origin:center 50%;">1S5</div>
<div class="t" style="left:292.9px;top:531.00px;font-size:17.5px;color:#111;transform:translateX(-50%) scaleX(0.9297);transform-origin:center 50%;">0</div>
<svg class="r" style="left:264px;top:554px" width="58" height="46" viewBox="0 0 58 46">
<defs><pattern id="hp264554" width="4.7" height="4.7" patternUnits="userSpaceOnUse" x="0.6" y="1"><rect width="4.7" height="4.7" fill="#c4c4c4"/><rect x="0" y="0" width="2.35" height="2.35" fill="#222"/><rect x="2.35" y="2.35" width="2.35" height="2.35" fill="#222"/></pattern></defs>
<path d="M6.6 1 H50 L57.25 8 V36.6 L49.7 44.2 H6 L1.4 37 V8 Z" fill="url(#hp264554)"/>
<rect x="7.4" y="9.3" width="41" height="25.7" fill="#fff" stroke="#0a0aff" stroke-width="3.2"/>
<text x="28.6" y="29.3" font-family="Liberation Sans" font-size="16.5" font-weight="bold" fill="#111" text-anchor="middle">1</text></svg>
<div class="t" style="left:361.4px;top:539.00px;font-size:17.5px;color:#111;transform:translateX(-50%) scaleX(0.8881);transform-origin:center 50%;">90.0</div>
<div class="t" style="left:361.35px;top:560.00px;font-size:17.5px;color:#111;transform:translateX(-50%) scaleX(0.83);transform-origin:center 50%;">120.0</div>
<div class="t" style="left:416.7px;top:539.00px;font-size:17.5px;color:#111;transform:translateX(-50%) scaleX(0.8352);transform-origin:center 50%;">3.00</div>
<div class="t" style="left:416.7px;top:560.00px;font-size:17.5px;color:#111;transform:translateX(-50%) scaleX(0.8352);transform-origin:center 50%;">0.00</div>
<div class="t" style="left:478px;top:539.00px;font-size:17.5px;color:#111;transform:translateX(-50%) scaleX(0.8385);transform-origin:center 50%;">4750.00</div>
<div class="t" style="left:478px;top:560.00px;font-size:17.5px;color:#111;transform:translateX(-50%) scaleX(0.8385);transform-origin:center 50%;">4750.00</div>
<div class="t" style="left:543px;top:539.00px;font-size:17.5px;color:#111;transform:translateX(-50%) scaleX(0.8735);transform-origin:center 50%;">0.3</div>
<div class="t" style="left:543px;top:560.00px;font-size:17.5px;color:#111;transform:translateX(-50%) scaleX(0.8735);transform-origin:center 50%;">2.9</div>
<div class="t" style="left:601.8px;top:539.00px;font-size:17.5px;color:#111;transform:translateX(-50%) scaleX(0.8694);transform-origin:center 50%;">0.2</div>
<div class="t" style="left:601.8px;top:560.00px;font-size:17.5px;color:#111;transform:translateX(-50%) scaleX(0.8694);transform-origin:center 50%;">2.2</div>
<div class="t" style="left:666px;top:539.00px;font-size:17.5px;color:#111;transform:translateX(-50%) scaleX(0.7913);transform-origin:center 50%;">2.9</div>
<div class="t" style="left:666px;top:560.00px;font-size:17.5px;color:#111;transform:translateX(-50%) scaleX(0.7913);transform-origin:center 50%;">2.9</div>
<div class="t" style="left:752px;top:539.00px;font-size:17.5px;color:#111;transform:translateX(-50%) scaleX(0.8602);transform-origin:center 50%;">157.08</div>
<div class="t" style="left:752px;top:560.00px;font-size:17.5px;color:#111;transform:translateX(-50%) scaleX(0.8602);transform-origin:center 50%;">314.16</div>
<div class="t" style="left:849px;top:539.00px;font-size:17.5px;color:#111;transform:translateX(-50%) scaleX(0.8602);transform-origin:center 50%;">120.04</div>
<div class="t" style="left:849px;top:560.00px;font-size:17.5px;color:#111;transform:translateX(-50%) scaleX(0.8602);transform-origin:center 50%;">314.16</div>
<div class="t" style="left:945.5px;top:539.00px;font-size:17.5px;color:#111;transform:translateX(-50%) scaleX(0.8602);transform-origin:center 50%;">157.08</div>
<div class="t" style="left:945.5px;top:560.00px;font-size:17.5px;color:#111;transform:translateX(-50%) scaleX(0.8602);transform-origin:center 50%;">314.16</div>
<div class="t" style="left:1046.9px;top:549.00px;font-size:17.5px;color:#111;transform:translateX(-50%) scaleX(0.8613);transform-origin:center 50%;">H10-250 (T<span style="font-size:10px;font-weight:normal;position:relative;top:1.5px;line-height:0">1</span>)</div>
<div class="t" style="left:1148.3px;top:538.00px;font-size:17.5px;color:#111;transform:translateX(-50%) scaleX(0.8665);transform-origin:center 50%;">-</div>
<div class="t" style="left:1149.9px;top:559.00px;font-size:17.5px;color:#111;transform:translateX(-50%) scaleX(0.84);transform-origin:center 50%;">H10-250 (B<span style="font-size:10px;font-weight:normal;position:relative;top:1.5px;line-height:0">1</span>)</div>
<div class="t" style="left:1253.7px;top:549.00px;font-size:17.5px;color:#111;transform:translateX(-50%) scaleX(0.8383);transform-origin:center 50%;">H10-250 (T<span style="font-size:10px;font-weight:normal;position:relative;top:1.5px;line-height:0">1</span>)</div>
<div class="t" style="left:292.5px;top:610.00px;font-size:17.5px;color:#111;transform:translateX(-50%) scaleX(0.8719);transform-origin:center 50%;">1S4</div>
<div class="t" style="left:292.9px;top:630.00px;font-size:17.5px;color:#111;transform:translateX(-50%) scaleX(0.9297);transform-origin:center 50%;">0</div>
<svg class="r" style="left:264px;top:652.6px" width="58" height="46" viewBox="0 0 58 46">
<defs><pattern id="hp264652.6" width="4.7" height="4.7" patternUnits="userSpaceOnUse" x="0.6" y="1"><rect width="4.7" height="4.7" fill="#c4c4c4"/><rect x="0" y="0" width="2.35" height="2.35" fill="#222"/><rect x="2.35" y="2.35" width="2.35" height="2.35" fill="#222"/></pattern></defs>
<path d="M6.6 1 H50 L57.25 8 V36.6 L49.7 44.2 H6 L1.4 37 V8 Z" fill="url(#hp264652.6)"/>
<rect x="7.4" y="9.3" width="41" height="25.7" fill="#fff" stroke="#0a0aff" stroke-width="3.2"/>
<text x="28.6" y="29.3" font-family="Liberation Sans" font-size="16.5" font-weight="bold" fill="#111" text-anchor="middle">1</text></svg>
<div class="t" style="left:361.4px;top:637.00px;font-size:17.5px;color:#111;transform:translateX(-50%) scaleX(0.8881);transform-origin:center 50%;">90.0</div>
<div class="t" style="left:361.35px;top:659.00px;font-size:17.5px;color:#111;transform:translateX(-50%) scaleX(0.83);transform-origin:center 50%;">120.0</div>
<div class="t" style="left:416.7px;top:637.00px;font-size:17.5px;color:#111;transform:translateX(-50%) scaleX(0.8352);transform-origin:center 50%;">3.00</div>
<div class="t" style="left:416.7px;top:659.00px;font-size:17.5px;color:#111;transform:translateX(-50%) scaleX(0.8352);transform-origin:center 50%;">0.00</div>
<div class="t" style="left:478px;top:637.00px;font-size:17.5px;color:#111;transform:translateX(-50%) scaleX(0.8385);transform-origin:center 50%;">4750.00</div>
<div class="t" style="left:478px;top:659.00px;font-size:17.5px;color:#111;transform:translateX(-50%) scaleX(0.8385);transform-origin:center 50%;">4750.00</div>
<div class="t" style="left:543px;top:637.00px;font-size:17.5px;color:#111;transform:translateX(-50%) scaleX(0.8735);transform-origin:center 50%;">0.3</div>
<div class="t" style="left:543px;top:659.00px;font-size:17.5px;color:#111;transform:translateX(-50%) scaleX(0.8735);transform-origin:center 50%;">2.9</div>
<div class="t" style="left:601.8px;top:637.00px;font-size:17.5px;color:#111;transform:translateX(-50%) scaleX(0.8694);transform-origin:center 50%;">0.2</div>
<div class="t" style="left:601.8px;top:659.00px;font-size:17.5px;color:#111;transform:translateX(-50%) scaleX(0.8694);transform-origin:center 50%;">2.2</div>
<div class="t" style="left:666px;top:637.00px;font-size:17.5px;color:#111;transform:translateX(-50%) scaleX(0.7913);transform-origin:center 50%;">2.9</div>
<div class="t" style="left:666px;top:659.00px;font-size:17.5px;color:#111;transform:translateX(-50%) scaleX(0.7913);transform-origin:center 50%;">2.9</div>
<div class="t" style="left:752px;top:637.00px;font-size:17.5px;color:#111;transform:translateX(-50%) scaleX(0.8602);transform-origin:center 50%;">157.08</div>
<div class="t" style="left:752px;top:659.00px;font-size:17.5px;color:#111;transform:translateX(-50%) scaleX(0.8602);transform-origin:center 50%;">314.16</div>
<div class="t" style="left:849px;top:637.00px;font-size:17.5px;color:#111;transform:translateX(-50%) scaleX(0.8602);transform-origin:center 50%;">120.04</div>
<div class="t" style="left:849px;top:659.00px;font-size:17.5px;color:#111;transform:translateX(-50%) scaleX(0.8602);transform-origin:center 50%;">314.16</div>
<div class="t" style="left:945.5px;top:637.00px;font-size:17.5px;color:#111;transform:translateX(-50%) scaleX(0.8602);transform-origin:center 50%;">157.08</div>
<div class="t" style="left:945.5px;top:659.00px;font-size:17.5px;color:#111;transform:translateX(-50%) scaleX(0.8602);transform-origin:center 50%;">314.16</div>
<div class="t" style="left:1046.9px;top:648.00px;font-size:17.5px;color:#111;transform:translateX(-50%) scaleX(0.8613);transform-origin:center 50%;">H10-250 (T<span style="font-size:10px;font-weight:normal;position:relative;top:1.5px;line-height:0">1</span>)</div>
<div class="t" style="left:1148.3px;top:637.00px;font-size:17.5px;color:#111;transform:translateX(-50%) scaleX(0.8665);transform-origin:center 50%;">-</div>
<div class="t" style="left:1149.9px;top:658.00px;font-size:17.5px;color:#111;transform:translateX(-50%) scaleX(0.84);transform-origin:center 50%;">H10-250 (B<span style="font-size:10px;font-weight:normal;position:relative;top:1.5px;line-height:0">1</span>)</div>
<div class="t" style="left:1253.7px;top:648.00px;font-size:17.5px;color:#111;transform:translateX(-50%) scaleX(0.8383);transform-origin:center 50%;">H10-250 (T<span style="font-size:10px;font-weight:normal;position:relative;top:1.5px;line-height:0">1</span>)</div>
<svg class="r" style="left:370px;top:320px" width="95" height="410" viewBox="0 0 95 410">
<rect x="10" y="9" width="74" height="388" rx="34" ry="38" fill="none" stroke="#ff0000" stroke-width="2.2"/></svg>
<div class="t" style="left:203.2px;top:747.00px;font-size:26px;color:#000;font-weight:bold;transform:scaleX(0.8208);transform-origin:left 50%;">Deflection Check</div>
<div class="r" style="left:252px;top:796px;width:570px;height:24px;background:#e5e5e5;"></div>
<div class="r" style="left:337px;top:796px;width:1px;height:91px;background:#1a1a1a;"></div>
<div class="r" style="left:450px;top:796px;width:1px;height:91px;background:#1a1a1a;"></div>
<div class="r" style="left:536px;top:796px;width:1px;height:91px;background:#1a1a1a;"></div>
<div class="r" style="left:649px;top:796px;width:1px;height:91px;background:#1a1a1a;"></div>
<div class="r" style="left:252px;top:842px;width:570px;height:1px;background:#111;"></div>
<div class="r" style="left:252px;top:863px;width:570px;height:1px;background:#111;"></div>
<div class="r" style="left:252px;top:796px;width:570px;height:2px;background:#000;"></div>
<div class="r" style="left:252px;top:818px;width:570px;height:2px;background:#000;"></div>
<div class="r" style="left:252px;top:885px;width:570px;height:2px;background:#000;"></div>
<div class="r" style="left:252px;top:796px;width:2px;height:91px;background:#000;"></div>
<div class="r" style="left:820px;top:796px;width:2px;height:91px;background:#000;"></div>
<div class="t" style="left:259.8px;top:800.00px;font-size:16.5px;color:#000;font-weight:bold;transform:scaleX(0.889);transform-origin:left 50%;">Slab</div>
<div class="t" style="left:344.7px;top:800.00px;font-size:16.5px;color:#000;font-weight:bold;transform:scaleX(0.9087);transform-origin:left 50%;">L/d</div>
<div class="t" style="left:456.5px;top:800.00px;font-size:16.5px;color:#000;font-weight:bold;transform:scaleX(0.9499);transform-origin:left 50%;">L/d<span style="font-size:11px;font-weight:normal;position:relative;top:2px;line-height:0">Maximum</span></div>
<div class="t" style="left:541.6px;top:800.00px;font-size:16.5px;color:#000;font-weight:bold;transform:scaleX(0.8697);transform-origin:left 50%;">s</div>
<div class="t" style="left:657px;top:800.00px;font-size:16.5px;color:#000;font-weight:bold;transform:scaleX(0.8722);transform-origin:left 50%;">Status</div>
<div class="t" style="left:259.8px;top:823.00px;font-size:17.5px;color:#111;transform:scaleX(0.8108);transform-origin:left 50%;">1S6</div>
<div class="t" style="left:344.7px;top:823.00px;font-size:17.5px;color:#111;transform:scaleX(0.8528);transform-origin:left 50%;">55.556</div>
<div class="t" style="left:456.5px;top:823.00px;font-size:17.5px;color:#111;transform:scaleX(0.8696);transform-origin:left 50%;">52.000</div>
<div class="t" style="left:541.6px;top:823.00px;font-size:17.5px;color:#111;transform:scaleX(0.848);transform-origin:left 50%;">55.556&gt;52.000</div>
<div class="t" style="left:665.4px;top:823.00px;font-size:16.5px;color:#ff0000;font-weight:bold;transform:scaleX(0.9886);transform-origin:left 50%;">X</div>
<div class="t" style="left:689.7px;top:823.00px;font-size:17.5px;color:#111;transform:scaleX(0.8443);transform-origin:left 50%;">Section Insufficient</div>
<div class="t" style="left:259.8px;top:845.00px;font-size:17.5px;color:#111;transform:scaleX(0.8108);transform-origin:left 50%;">1S5</div>
<div class="t" style="left:344.7px;top:845.00px;font-size:17.5px;color:#111;transform:scaleX(0.8528);transform-origin:left 50%;">55.556</div>
<div class="t" style="left:456.5px;top:845.00px;font-size:17.5px;color:#111;transform:scaleX(0.8696);transform-origin:left 50%;">52.000</div>
<div class="t" style="left:541.6px;top:845.00px;font-size:17.5px;color:#111;transform:scaleX(0.848);transform-origin:left 50%;">55.556&gt;52.000</div>
<div class="t" style="left:665.4px;top:845.00px;font-size:16.5px;color:#ff0000;font-weight:bold;transform:scaleX(0.9886);transform-origin:left 50%;">X</div>
<div class="t" style="left:689.7px;top:845.00px;font-size:17.5px;color:#111;transform:scaleX(0.8443);transform-origin:left 50%;">Section Insufficient</div>
<div class="t" style="left:259.8px;top:868.00px;font-size:17.5px;color:#111;transform:scaleX(0.8108);transform-origin:left 50%;">1S4</div>
<div class="t" style="left:344.7px;top:868.00px;font-size:17.5px;color:#111;transform:scaleX(0.8528);transform-origin:left 50%;">55.556</div>
<div class="t" style="left:456.5px;top:868.00px;font-size:17.5px;color:#111;transform:scaleX(0.8696);transform-origin:left 50%;">52.000</div>
<div class="t" style="left:541.6px;top:868.00px;font-size:17.5px;color:#111;transform:scaleX(0.848);transform-origin:left 50%;">55.556&gt;52.000</div>
<div class="t" style="left:665.4px;top:868.00px;font-size:16.5px;color:#ff0000;font-weight:bold;transform:scaleX(0.9886);transform-origin:left 50%;">X</div>
<div class="t" style="left:689.7px;top:868.00px;font-size:17.5px;color:#111;transform:scaleX(0.8443);transform-origin:left 50%;">Section Insufficient</div>
<div class="r" style="left:0px;top:921px;width:1418px;height:38px;background:#0072c6;"></div>
<div class="r" style="left:0px;top:958px;width:1418px;height:1px;background:#10508a;"></div>
<div class="t" style="left:9px;top:933.00px;font-size:13px;color:#ffffff;">Slab Analysis and Design</div>
<div class="r" style="left:166px;top:925px;width:2px;height:29px;background:#e8f0f8;"></div>
<svg class="r" style="left:184px;top:931px" width="36" height="16" viewBox="0 0 36 16">
<path d="M8 2L2.5 8L8 14M14 2L8.5 8L14 14M32 2L26.5 8L32 14" fill="none" stroke="#8ab6e2" stroke-width="2"/></svg>
<div class="t" style="left:230px;top:933.00px;font-size:13px;color:#ffffff;">Page:</div>
<div class="r" style="left:268px;top:927px;width:37px;height:24px;background:#ffffff;"></div>
<div class="t" style="left:281px;top:933.00px;font-size:13px;color:#333;">1.</div>
<div class="t" style="left:320px;top:933.00px;font-size:13px;color:#ffffff;">/1</div>
<svg class="r" style="left:344px;top:931px" width="36" height="16" viewBox="0 0 36 16">
<path d="M3 2L8.5 8L3 14M19 2L24.5 8L19 14M25 2L30.5 8L25 14" fill="none" stroke="#8ab6e2" stroke-width="2"/></svg>
<div class="r" style="left:396px;top:925px;width:2px;height:29px;background:#e8f0f8;"></div>
<svg class="r" style="left:408px;top:930px" width="18" height="18" viewBox="0 0 18 18">
<circle cx="9" cy="9" r="8.5" fill="#2aa0e8"/><rect x="7.8" y="7.5" width="2.6" height="7" fill="#fff"/><rect x="7.8" y="3.5" width="2.6" height="2.6" fill="#fff"/></svg>
<div class="t" style="left:432px;top:933.00px;font-size:13px;color:#ffffff;">No Errors</div>
<svg class="r" style="left:505px;top:930px" width="18" height="18" viewBox="0 0 18 18">
<circle cx="9" cy="9" r="8.5" fill="#2aa0e8"/><rect x="7.8" y="7.5" width="2.6" height="7" fill="#fff"/><rect x="7.8" y="3.5" width="2.6" height="2.6" fill="#fff"/></svg>
<div class="t" style="left:529.5px;top:933.00px;font-size:13px;color:#ffffff;">No Warnings</div>
<svg class="r" style="left:623px;top:930px" width="18" height="18" viewBox="0 0 18 18">
<circle cx="9" cy="9" r="8.5" fill="#2aa0e8"/><rect x="7.8" y="7.5" width="2.6" height="7" fill="#fff"/><rect x="7.8" y="3.5" width="2.6" height="2.6" fill="#fff"/></svg>
<div class="t" style="left:647.4px;top:933.00px;font-size:13px;color:#ffffff;">Messages: 0</div>
<div class="r" style="left:1151px;top:938px;width:9px;height:2px;background:#e8f0f8;"></div>
<div class="r" style="left:1168px;top:938px;width:140px;height:1px;background:#e8f0f8;"></div>
<div class="r" style="left:1236px;top:934px;width:1px;height:9px;background:#e8f0f8;"></div>
<div class="r" style="left:1238px;top:934px;width:5px;height:10px;background:#b4d2ee;"></div>
<div class="r" style="left:1316px;top:938px;width:10px;height:2px;background:#e8f0f8;"></div>
<div class="r" style="left:1320px;top:934px;width:2px;height:10px;background:#e8f0f8;"></div>
<div class="t" style="left:1346.5px;top:933.00px;font-size:13px;color:#ffffff;">120%</div>
<div class="r" style="left:1412px;top:945px;width:2px;height:2px;background:#cfe0f2;"></div>
<div class="r" style="left:1408px;top:949px;width:2px;height:2px;background:#cfe0f2;"></div>
<div class="r" style="left:1412px;top:949px;width:2px;height:2px;background:#cfe0f2;"></div>
<div class="r" style="left:1404px;top:953px;width:2px;height:2px;background:#cfe0f2;"></div>
<div class="r" style="left:1408px;top:953px;width:2px;height:2px;background:#cfe0f2;"></div>
<div class="r" style="left:1412px;top:953px;width:2px;height:2px;background:#cfe0f2;"></div>
</body></html>
